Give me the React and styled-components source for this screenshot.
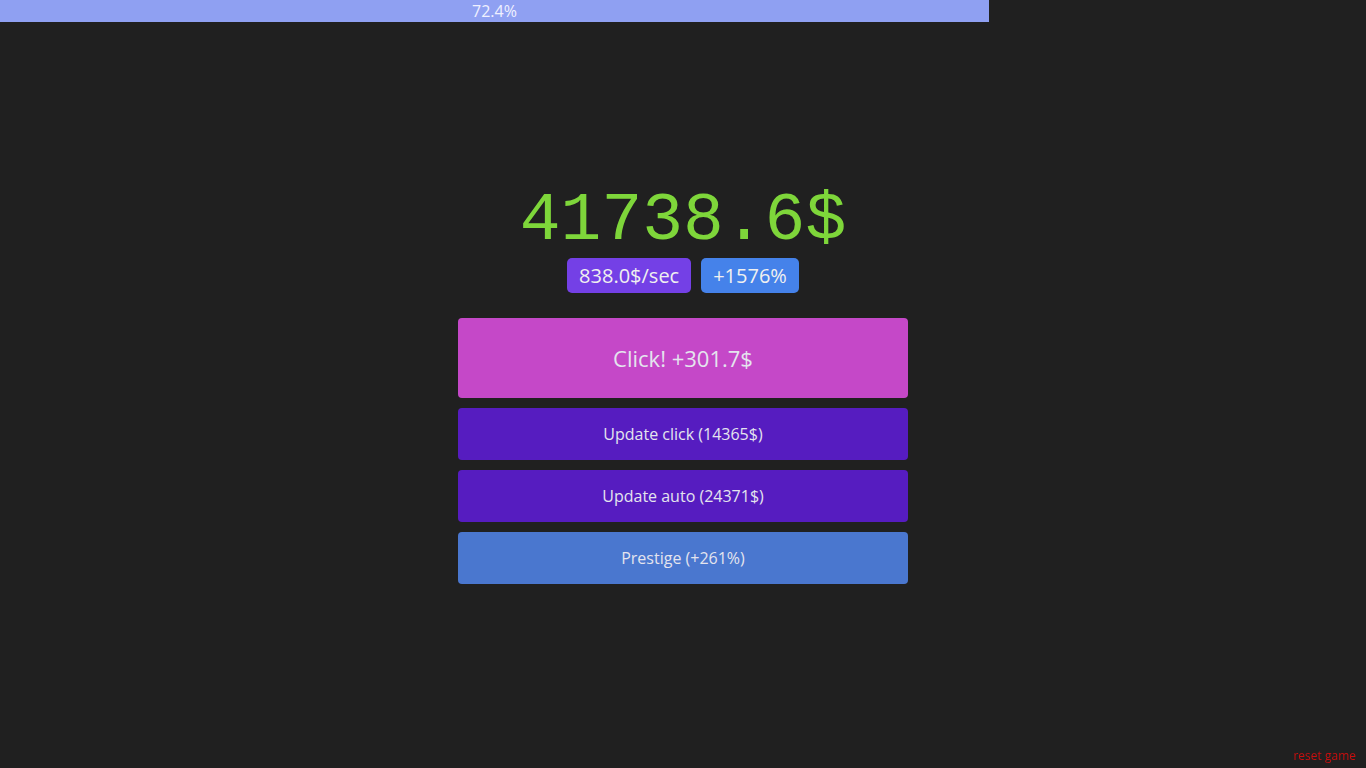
import React from "react";
import styled, { createGlobalStyle } from "styled-components";

const Global = createGlobalStyle`
  html, body { margin: 0; padding: 0; background: #202020; }
  body { font-family: "Open Sans", "Noto Sans", sans-serif; color: #e6e6e6; }
  * { box-sizing: border-box; }
`;

const ProgressTrack = styled.div`
  position: fixed;
  top: 0;
  left: 0;
  width: 100%;
  height: 22px;
`;

const ProgressFill = styled.div`
  height: 100%;
  background: #8fa0f2;
  display: flex;
  align-items: center;
  justify-content: center;
  font-size: 16px;
  line-height: 22px;
  color: #f0f0ff;
`;

const Page = styled.main`
  min-height: 100vh;
  display: flex;
  align-items: center;
  justify-content: center;
`;

const Panel = styled.div`
  width: 450px;
  display: flex;
  flex-direction: column;
  align-items: center;
`;

const Money = styled.div`
  font-family: "Liberation Mono", "Courier New", monospace;
  font-size: 68px;
  line-height: 74px;
  color: #7ed63a;
  white-space: nowrap;
`;

const BadgeRow = styled.div`
  display: flex;
  gap: 10px;
  margin-bottom: 25px;
`;

const Badge = styled.span`
  background: ${(p) => p.$bg};
  color: #f0f0f0;
  font-size: 20px;
  line-height: 35px;
  height: 35px;
  padding: 0 12px;
  border-radius: 5px;
`;

const Buttons = styled.div`
  width: 100%;
  display: flex;
  flex-direction: column;
  gap: 10px;
`;

const ActionButton = styled.button`
  width: 100%;
  height: ${(p) => (p.$big ? "80px" : "52px")};
  border: none;
  border-radius: 4px;
  background: ${(p) => p.$bg};
  color: #e4e4ee;
  font-family: "Open Sans", "Noto Sans", sans-serif;
  font-size: ${(p) => (p.$big ? "22px" : "16px")};
  cursor: pointer;
  padding: 0;
`;

const Reset = styled.button`
  position: fixed;
  right: 10px;
  bottom: 4px;
  background: none;
  border: none;
  padding: 0;
  color: #c80f0f;
  font-family: "Open Sans", "Noto Sans", sans-serif;
  font-size: 12px;
  line-height: 16px;
  cursor: pointer;
`;

export default function App() {
  const progress = 72.4;
  return (
    <>
      <Global />
      <ProgressTrack>
        <ProgressFill style={{ width: `${progress}%` }}>{progress}%</ProgressFill>
      </ProgressTrack>
      <Page>
        <Panel>
          <Money>41738.6$</Money>
          <BadgeRow>
            <Badge $bg="#7440e6">838.0$/sec</Badge>
            <Badge $bg="#4582ea">+1576%</Badge>
          </BadgeRow>
          <Buttons>
            <ActionButton $big $bg="#c548c8">Click! +301.7$</ActionButton>
            <ActionButton $bg="#561cc0">Update click (14365$)</ActionButton>
            <ActionButton $bg="#561cc0">Update auto (24371$)</ActionButton>
            <ActionButton $bg="#4a77cf">Prestige (+261%)</ActionButton>
          </Buttons>
        </Panel>
      </Page>
      <Reset>reset game</Reset>
    </>
  );
}
